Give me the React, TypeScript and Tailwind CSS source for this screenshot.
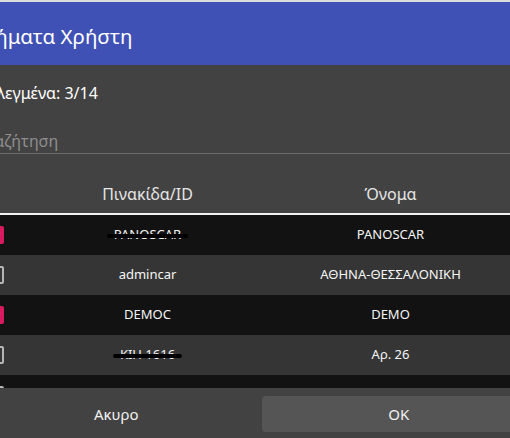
import React from 'react';

type Row = { checked: boolean; id: string; name: string; redacted?: boolean };

const rows: Row[] = [
  { checked: true, id: 'PANOSCAR', name: 'PANOSCAR', redacted: true },
  { checked: false, id: 'admincar', name: 'ΑΘΗΝΑ-ΘΕΣΣΑΛΟΝΙΚΗ' },
  { checked: true, id: 'DEMOC', name: 'DEMO' },
  { checked: false, id: 'KIH 1616', name: 'Αρ. 26', redacted: true },
  { checked: false, id: 'TESTCAR', name: 'ΠΑΤΡΑ' },
  { checked: false, id: 'CAR06', name: 'ΛΑΡΙΣΑ' },
];

function Checkbox({ checked }: { checked: boolean }) {
  if (checked) {
    return (
      <div className="w-[18px] h-[18px] rounded-[2px] bg-[#d81b60] flex items-center justify-center">
        <svg width="14" height="14" viewBox="0 0 24 24" fill="none" stroke="white" strokeWidth="3">
          <path d="M5 12l5 5L20 7" />
        </svg>
      </div>
    );
  }
  return <div className="w-[18px] h-[18px] rounded-[2px] border-2 border-[#b5b5b5]" />;
}

export default function App() {
  return (
    <div className="w-[510px] h-[438px] overflow-hidden bg-[#424242] font-['Noto_Sans',sans-serif] text-white">
      <div className="ml-[-48px] w-[611px] h-[438px] flex flex-col">
        <div className="h-[2px] bg-[#dcdcdc]" />
        <div className="h-[63px] bg-[#3f51b5] pl-[15px] pt-[20px] text-[20.5px] leading-[28px] whitespace-nowrap">
          Οχήματα Χρήστη
        </div>
        <div className="pl-[20px] pt-[16px] text-[16px] leading-[24px] text-white whitespace-nowrap">
          Επιλεγμένα: 3/14
        </div>
        <div className="mx-[24px] pt-[24px] border-b border-[#6b6b6b]">
          <div className="h-[24px] text-[16px] leading-[24px] text-[#8e8e8e] whitespace-nowrap">Αναζήτηση</div>
        </div>
        <div className="h-[59px] grid grid-cols-[74px_243px_243px_1fr] items-end pb-[7px] text-[16px] leading-[24px] text-[#e6e6e6]">
          <div />
          <div className="text-center">Πινακίδα/ID</div>
          <div className="text-center">Όνομα</div>
          <div />
        </div>
        <div className="h-[2px] bg-[#f2f2f2]" />
        <div className="h-[173px] overflow-hidden">
          {rows.map((r, i) => (
            <div
              key={i}
              className={
                'h-[40px] grid grid-cols-[74px_243px_243px_1fr] items-center text-[13px] text-[#f5f5f5] ' +
                (i % 2 === 0 ? 'bg-[#121212]' : 'bg-[#353535]')
              }
            >
              <div className="pl-[34px]">
                <Checkbox checked={r.checked} />
              </div>
              <div className="flex justify-center">
                <span className="relative">
                  {r.id}
                  {r.redacted && (
                    <span className="absolute left-[-7px] right-[-7px] top-[55%] h-[4px] -translate-y-1/2 rounded-full bg-black" />
                  )}
                </span>
              </div>
              <div className="text-center">{r.name}</div>
              <div />
            </div>
          ))}
        </div>
        <div className="h-[50px] grid grid-cols-2 gap-[8px] px-[27px] pt-[8px] pb-[6px] bg-[#424242] text-[15px]">
          <div className="rounded-[4px] flex items-center justify-center text-[#f0f0f0]">Ακυρο</div>
          <div className="rounded-[4px] bg-[#555555] flex items-center justify-center text-[#f0f0f0]">OK</div>
        </div>
      </div>
    </div>
  );
}
